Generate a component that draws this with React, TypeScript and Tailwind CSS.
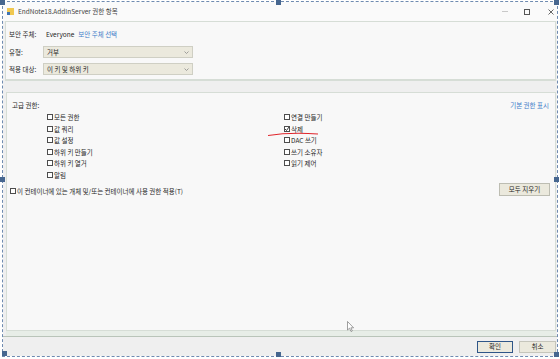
import React from 'react'

function Check({ label, checked }: { label: string; checked?: boolean }) {
  return (
    <div className="flex h-[11.5px] items-center">
      <span className="relative h-[6px] w-[6px] border border-[#4d4d4d] bg-white">
        {checked && (
          <svg className="absolute -left-[1px] -top-[1px] overflow-visible" width="6" height="6" viewBox="0 0 6 6">
            <polyline points="1,3 2.5,4.5 5,1" fill="none" stroke="#222" strokeWidth="0.9" />
          </svg>
        )}
      </span>
      <span className="ml-[1px] leading-none">{label}</span>
    </div>
  )
}

function Select({ value }: { value: string }) {
  return (
    <div className="flex h-[12px] w-[150px] items-center justify-between border border-[#cfcfc4] bg-[#ebe9dd] pl-[3px] pr-[3px]">
      <span className="leading-none">{value}</span>
      <svg width="5" height="3" viewBox="0 0 5 3">
        <polyline points="0.5,0.5 2.5,2.5 4.5,0.5" fill="none" stroke="#8a8a8a" strokeWidth="0.8" />
      </svg>
    </div>
  )
}

function Handle({ className }: { className: string }) {
  return <div className={`absolute h-[5px] w-[5px] bg-[#46668f] ${className}`} />
}

export default function App() {
  const left = ['모든 권한', '값 쿼리', '값 설정', '하위 키 만들기', '하위 키 열거', '알림']
  const right = ['연결 만들기', '삭제', 'DAC 쓰기', '쓰기 소유자', '읽기 제어']

  return (
    <div className="relative h-[359px] w-[560px] overflow-hidden bg-white font-['Noto_Sans_CJK_KR','Noto_Sans',sans-serif] text-[6.5px] text-[#1e1e1e]">
      <div className="ml-[2px] mt-[1px] flex h-[356px] w-[556px] flex-col border border-dashed border-[#6f8bb0]">
        {/* Title bar */}
        <div className="flex h-[19px] items-center bg-[#fafafa]">
          <div className="ml-[4px] flex h-[7px] w-[7px] items-end bg-[#f0c850]">
            <div className="h-[3px] w-[3px] bg-[#3f73b5]" />
          </div>
          <span className="ml-[4px] leading-none text-[#444]">EndNote18.AddInServer 권한 항목</span>
          <div className="ml-auto flex items-center">
            <div className="h-px w-[6px] bg-[#c9c9c9]" />
            <div className="ml-[16px] h-[6px] w-[6px] border border-[#555]" />
            <svg className="ml-[18px] mr-[3px]" width="6" height="6" viewBox="0 0 6 6">
              <path d="M0.5 0.5 L5.5 5.5 M5.5 0.5 L0.5 5.5" stroke="#555" strokeWidth="0.9" />
            </svg>
          </div>
        </div>

        {/* Body */}
        <div className="flex flex-1 flex-col bg-[#efefef]">
          {/* Top panel */}
          <div className="ml-[2px] mr-[1px] h-[60px] border border-b-2 border-[#d6ddd6] bg-[#f8f8f8] pl-[3px] pt-[6px]">
            <div className="flex h-[12px] items-center">
              <span className="w-[37px] leading-none">보안 주체:</span>
              <span className="leading-none">Everyone</span>
              <span className="ml-[4px] leading-none text-[#3b7bc8]">보안 주체 선택</span>
            </div>
            <div className="mt-[6px] flex h-[12px] items-center">
              <span className="w-[34px] leading-none">유형:</span>
              <Select value="거부" />
            </div>
            <div className="mt-[5px] flex h-[12px] items-center">
              <span className="w-[34px] leading-none">적용 대상:</span>
              <Select value="이 키 및 하위 키" />
            </div>
          </div>

          {/* Advanced panel */}
          <div className="relative ml-[3px] mr-[1px] mt-[11px] flex h-[239px] flex-col border border-[#d6ddd6] bg-[#f8f8f8] pt-[6px]">
            <div className="flex h-[12px] items-center justify-between pl-[5px] pr-[6px]">
              <span className="leading-none">고급 권한:</span>
              <span className="leading-none text-[#3b7bc8]">기본 권한 표시</span>
            </div>
            <div className="mt-[0.5px] flex pl-[40px]">
              <div className="w-[237px]">
                {left.map((l) => (
                  <Check key={l} label={l} />
                ))}
              </div>
              <div>
                {right.map((r) => (
                  <Check key={r} label={r} checked={r === '삭제'} />
                ))}
              </div>
            </div>
            <div className="mt-[2px] flex items-end justify-between pl-[3px] pr-[5px]">
              <div className="flex h-[9px] items-center">
                <span className="h-[6px] w-[6px] border border-[#4d4d4d] bg-white" />
                <span className="ml-[1px] leading-none">이 컨테이너에 있는 개체 및/또는 컨테이너에 사용 권한 적용(T)</span>
              </div>
              <div className="flex h-[13px] w-[51px] items-center justify-center border border-[#bdbdb2] bg-[#ebe9dd] leading-none">
                모두 지우기
              </div>
            </div>
            <svg className="absolute left-[261px] top-[38px]" width="52" height="6" viewBox="0 0 52 6">
              <path d="M0 4.5 Q22 1 50 3" fill="none" stroke="#e0262c" strokeWidth="1.1" />
            </svg>
            <svg className="absolute left-[340px] top-[228px]" width="8" height="12" viewBox="0 0 8 12">
              <path d="M0.5 0.5 L0.5 9 L2.5 7.2 L4 10.5 L5.3 10 L3.9 6.8 L6.6 6.8 Z" fill="#fff" stroke="#777" strokeWidth="0.7" />
            </svg>
          </div>

          {/* Strip and bottom bar */}
          <div className="ml-[3px] mr-[1px] h-[5px] bg-[#e7ede7]" />
          <div className="h-px bg-[#b9c4b9]" />
          <div className="flex h-[19px] items-center justify-end pr-[1px]">
            <div className="flex h-[12px] w-[36px] items-center justify-center border border-[#2f5688] bg-[#ebe9dd] leading-none">
              확인
            </div>
            <div className="ml-[6px] flex h-[12px] w-[37px] items-center justify-center border border-[#c5c5bb] bg-[#ebe9dd] leading-none">
              취소
            </div>
          </div>
        </div>
      </div>

      <Handle className="left-0 top-0" />
      <Handle className="left-[276px] top-0" />
      <Handle className="left-[554px] top-0" />
      <Handle className="left-0 top-[177px]" />
      <Handle className="left-[554px] top-[177px]" />
      <Handle className="left-[2px] top-[351px]" />
      <Handle className="left-[276px] top-[352px]" />
      <Handle className="left-[554px] top-[352px]" />
    </div>
  )
}
